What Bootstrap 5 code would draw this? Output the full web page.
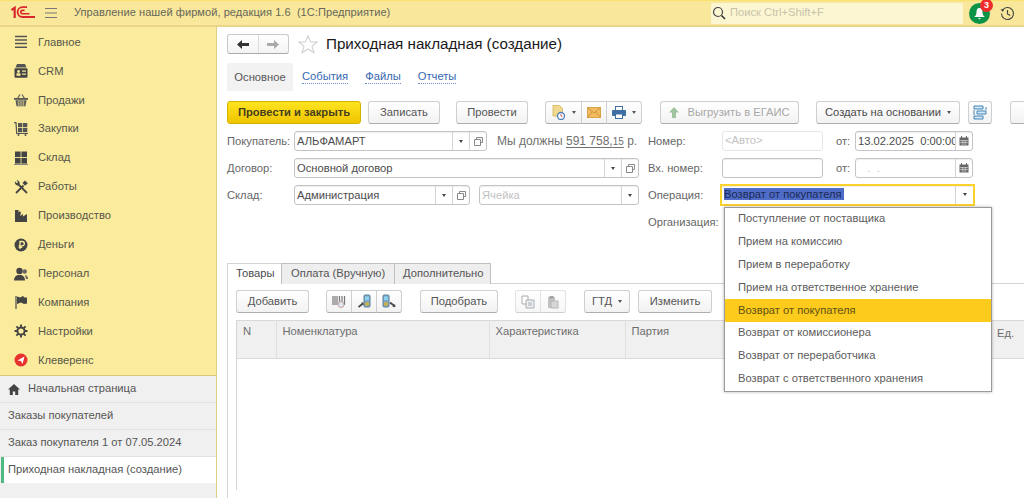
<!DOCTYPE html>
<html lang="ru"><head><meta charset="utf-8"><title>Приходная накладная</title>
<link href="https://cdn.jsdelivr.net/npm/bootstrap@5.3.0/dist/css/bootstrap.min.css" rel="stylesheet">
<style>
html,body{height:498px;overflow:hidden;background:#fff}
body{font-family:"Liberation Sans",Arial,sans-serif;font-size:11.2px;color:#555;line-height:1.2}
.topbar{height:27px;background:#f9e89b;border-top:1px solid #fbe26f;border-bottom:2px solid #ead68a}
.logo1c{width:24px;margin-left:11px;margin-right:9px;flex:none}
.burger{width:14px;margin-right:16px;flex:none}
.apptitle{font-size:11.05px;color:#66665a;letter-spacing:.05px;white-space:pre}
.searchbox{width:252px;height:21px;background:#fdf6d3;border-radius:2px;margin-right:6px;color:#c8c3aa;font-size:11.2px;padding-left:1px}
.bellwrap{width:21px;height:21px;background:#0b9347;border-radius:50%;margin-right:10px}
.bellbadge{top:-4px;left:11px;width:13px;height:13px;background:#ee2c2c;color:#fff;border-radius:50%;font-size:9px;font-weight:700;line-height:13px;text-align:center}
.histico{margin-right:9px}
.bodywrap{height:471px}
.sidebar{width:217px;background:#fbec9d;border-right:1px solid #dfcf85}
.menulist{padding-top:1px;height:348px}
.menuitem{height:28.9px;padding-left:14px;color:#56564a;font-size:11.2px}
.menuitem svg{width:14px;height:14px;margin-right:10px;flex:none}
.opentabs{background:#f0f0f0;border-top:1px solid #d8c878;flex:1}
.opentab{height:27px;padding-left:8px;border-bottom:1px solid #e2e2e2;color:#555;font-size:11.2px}
.opentab svg{margin-right:8px}
.opentab-active{background:#fff;border-left:3px solid #4fb97f;margin-left:1px;padding-left:4px;height:26px;border-bottom:0}
.mainpane{padding-left:10px;min-width:0;overflow:hidden}
.navrow{margin-top:7px;height:20px}
.navbtns{width:62px;height:20px;border:1px solid #c9c9c9;border-bottom-color:#aaa;border-radius:3px;background:linear-gradient(#fff,#f3f3f3)}
.navbtns>div{flex:1;height:100%}
.navbtns>div+div{border-left:1px solid #ddd}
.pagetitle{font-size:15.2px;color:#1a1a1a;margin:0 0 0 8px;font-weight:400}
.starico{margin-left:9px}
.subnav{margin-top:9px;height:28px}
.subnav .nav-link{padding:0 8.5px;color:#3667b0;font-size:11.2px;height:28px;display:flex;align-items:center}
.subnav .nav-link span{border-bottom:1px dotted #6d93c9;line-height:13px}
.subnav .nav-link.current{background:#f2f2f2;color:#555;width:66px;justify-content:center;padding:0;border-radius:2px;margin-right:.5px}
.subnav .nav-link.current span{border:0}
.toolrow{margin-top:10px;height:23px;white-space:nowrap;width:900px}
.gbtn{--bs-btn-padding-y:0;--bs-btn-padding-x:0;--bs-btn-font-size:11.2px;--bs-btn-border-radius:3px;height:23px;border:1px solid #cfcfcf;border-bottom-color:#aeaeae;background:linear-gradient(#fff,#f2f2f2);color:#555;display:flex;align-items:center;justify-content:center;flex:none}
.gbtn-main{width:134px;background:linear-gradient(#fde41f,#f0c400);border-color:#d5b200;color:#46401f;font-weight:700;margin-right:7px}
.w-zap{width:72px;margin-right:16px}
.w-prov{width:72px;margin-right:17px}
.gbtn-gray{color:#a8a8a8}
.w-eg{width:139px;margin-right:17px}
.w-cr{width:144px;margin-right:8px;color:#4a4a4a}
.w-ic{width:24px;margin-right:18px}
.w-more{width:60px}
.grp{display:flex;margin-right:18px;flex:none}
.grp .gbtn{border-radius:0;margin-left:-1px}
.grp .gbtn:first-child{border-radius:3px 0 0 3px;margin-left:0}
.grp .gbtn:last-child{border-radius:0 3px 3px 0}
.caretm{width:0;height:0;border-left:2.5px solid transparent;border-right:2.5px solid transparent;border-top:3px solid #555;margin-left:6px}
.w-file{width:37px}.w-mail{width:26px}.w-print{width:36px}
.frow{height:20px;margin-top:7px}
.frow:first-of-type{margin-top:8px}
.leftcol{width:421px;flex:none}
.flbl{width:67px;flex:none;color:#666;padding-top:1px}
.rlbl{width:74px;flex:none;color:#666;padding-top:1px}
.otlbl{width:32px;flex:none;padding-left:13px;color:#666;padding-top:1px}
.fld{height:20px;border:1px solid #c4c4c4;border-radius:3px;background:#fff;box-shadow:inset 0 1px 1px #eee;color:#4c4c4c;font-size:11.2px;padding-left:2px;overflow:hidden;flex:none;white-space:nowrap}
.fld .ftxt{flex:1;min-width:0;overflow:hidden;padding-top:1px}
.fbtn{width:17px;height:100%;border-left:1px solid #d4d4d4;flex:none;display:flex;align-items:center;justify-content:center}
.dcar{width:0;height:0;border-left:2.5px solid transparent;border-right:2.5px solid transparent;border-top:3px solid #444}
.w193{width:193px}.w345{width:345px}.w176{width:176px;margin-right:9px}.w160{width:160px}
.w101{width:101px}.w118{width:118px}
.fld-ghost{border-color:#e6e6e6;color:#c2c2c2;box-shadow:none}
.fld .fld-ph{color:#c2c2c2}
.debt{margin-left:10px;color:#707070;font-size:12px;white-space:nowrap;padding-top:1px}
.debt u{text-decoration-thickness:1px;text-underline-offset:2px}
.debt small{font-size:10px}
.fld-focus{width:255px;margin-left:-2px;border:2px solid #fcd22d;border-radius:0;padding-left:2px;height:22px;margin-top:-1px}
.fld-focus .fbtn{width:18px}
.sel{background:#4f6dc8;color:#1c2a55;padding-right:2px}
.docbody{margin-top:31px;height:235px}
.tabbar{border-bottom:1px solid #d4d4d4;height:21px;margin:0}
.tabbar .nav-link{padding:0 0 0 8px;height:21px;font-size:11.2px;color:#555;background:#eee;border:1px solid #bfbfbf;border-bottom:0;border-radius:0;margin:0;line-height:19px}
.tabbar .nav-link.active{background:#fff;color:#4c4c4c;border-color:#d4d4d4}
.tabbar li:first-child .nav-link{width:55px}
.tabbar li:nth-child(2) .nav-link{width:114px;margin-left:-1px;padding-left:9px}
.tabbar li:nth-child(3) .nav-link{width:97px;margin-left:-1px}
.tabpane{border-left:1px solid #d4d4d4;padding:6px 0 0 8px;height:215px}
.gridbar{height:23px}
.w-add{width:73px;margin-right:17px}
.w-pod{width:78px;margin-right:17px}
.w-gtd{width:46px;margin-right:8px}
.w-izm{width:74px}
.ib{width:26px}
.dbtn{opacity:.6}
.tblwrap{margin-top:7px;width:800px;border-left:1px solid #d4d4d4;height:170px}
.tblwrap table{table-layout:fixed;width:790px;margin:0;--bs-table-bg:transparent;border-top:1px solid #d8d8d8}
.tblwrap th{height:38px;background:#f0f0f0;border-right:1px solid #e0e0e0;border-bottom:1px solid #d8d8d8;font-weight:400;font-size:11.2px;color:#6e6e6e;padding:4px 6px;vertical-align:top}
.c1{width:39px}.c2{width:213px}.c3{width:136px}.c4{width:402px}
.popmenu{left:724px;top:207px;width:268px;z-index:20;border:1px solid #9a9a9a;background:#fff;box-shadow:0 0 3px rgba(0,0,0,.3);padding:0;border-radius:0}
.popmenu .list-group-item{height:22.85px;border:0;padding:0 0 1px 13px;font-size:11.2px;display:flex;align-items:center;color:#5c5c5c;border-radius:0}
.popmenu .list-group-item.picked{background:#fccb1c;color:#5f5015}
.edcol{left:997px;top:327px;color:#6e6e6e;z-index:5}
</style></head><body>

<div class="topbar d-flex align-items-center">
 <svg class="logo1c" height="14" viewBox="0 0 24 14"><path d="M.5 4L3.700 1.800V12" fill="none" stroke="#d9272e" stroke-width="2.200"/><path d="M16 1.200h-4.500a4.900 4.900 0 0 0 0 9.800H24" fill="none" stroke="#d9272e" stroke-width="1.800"/><path d="M18.500 7.800h-7a1.700 1.700 0 0 1 0-3.400h2" fill="none" stroke="#d9272e" stroke-width="1.600"/></svg>
 <svg class="burger" height="12" viewBox="0 0 14 12"><path d="M1 1.500h12M1 6h12M1 10.500h12" stroke="#777" stroke-width="1.200"/></svg>
 <span class="apptitle">Управление нашей фирмой, редакция 1.6  (1С:Предприятие)</span>
 <div class="ms-auto d-flex align-items-center">
  <div class="searchbox d-flex align-items-center">
   <svg width="14" height="14" viewBox="0 0 14 14"><circle cx="6" cy="6" r="4.500" fill="none" stroke="#444" stroke-width="1.200"/><path d="M9.500 9.500L13 13" stroke="#333" stroke-width="1.600"/></svg>
   <span class="ms-1">Поиск Ctrl+Shift+F</span>
  </div>
  <div class="bellwrap position-relative d-flex align-items-center justify-content-center">
   <svg width="13" height="13" viewBox="0 0 13 13"><path d="M6.500 1C4 1 3.500 3 3.500 5.500c0 2-1 3.500-2.500 4.500h11c-1.500-1-2.500-2.500-2.500-4.500C9.500 3 9 1 6.500 1z" fill="#fff"/><path d="M5 11h3l-1.500 1.500z" fill="#fff"/></svg>
   <span class="bellbadge position-absolute">3</span>
  </div>
  <svg class="histico" width="15" height="15" viewBox="0 0 15 15"><path d="M2.300 4.500A6 6 0 1 1 1.500 7.500" fill="none" stroke="#444" stroke-width="1.100"/><path d="M0.500 3.500l3.500-.5-1 3z" fill="#444"/><path d="M7.500 4v4l2.800 1.500" fill="none" stroke="#444" stroke-width="1.200"/></svg>
 </div>
</div>

<div class="bodywrap d-flex">
 <aside class="sidebar d-flex flex-column flex-shrink-0">
  <div class="menulist">
   <div class="menuitem d-flex align-items-center"><svg viewBox="0 0 14 14"><path d="M1 1.500h12M1 5h12M1 8.500h12M1 12.300h12" stroke="#555" stroke-width="1.600"/></svg>Главное</div>
   <div class="menuitem d-flex align-items-center"><svg viewBox="0 0 14 14"><path d="M3 0h8l1.500 3.500h-11z" fill="#555"/><rect x="0.500" y="4.300" width="13" height="9.500" rx="1" fill="#444"/><rect x="8" y="6.500" width="4" height="1.200" fill="#fbec9d"/><rect x="8" y="9.500" width="4" height="1.200" fill="#fbec9d"/><circle cx="4.500" cy="7.500" r="1.400" fill="#fbec9d"/><rect x="2.500" y="9.300" width="4" height="2.500" fill="#fbec9d"/></svg>CRM</div>
   <div class="menuitem d-flex align-items-center"><svg viewBox="0 0 14 14"><path d="M3.500 5.500L6 1.500M10.500 5.500L8 1.500" fill="none" stroke="#555" stroke-width="1.100"/><path d="M0 5h14v1.800H0z" fill="#555"/><path d="M1.500 7.200h11l-1 6h-9z" fill="#555"/><path d="M4.300 7.500v5.500M6.100 7.500v5.500M7.900 7.500v5.500M9.700 7.500v5.500" stroke="#fbec9d" stroke-width=".7"/></svg>Продажи</div>
   <div class="menuitem d-flex align-items-center"><svg viewBox="0 0 14 14"><path d="M0 .7h2l.7 10.800H14" fill="none" stroke="#555" stroke-width="1.200"/><rect x="4" y="1" width="4.300" height="4.200" fill="#555"/><rect x="9" y="1" width="4.300" height="4.200" fill="#555"/><rect x="4" y="6" width="4.300" height="4.200" fill="#555"/><rect x="9" y="6" width="4.300" height="4.200" fill="#555"/><circle cx="4.500" cy="13" r="1" fill="#555"/><circle cx="11.500" cy="13" r="1" fill="#555"/></svg>Закупки</div>
   <div class="menuitem d-flex align-items-center"><svg viewBox="0 0 14 14"><rect x="1" y="0.500" width="5.600" height="5.600" fill="#444"/><rect x="7.400" y="0.500" width="5.600" height="5.600" fill="#444"/><rect x="1" y="7" width="5.600" height="5.600" fill="#444"/><rect x="7.400" y="7" width="5.600" height="5.600" fill="#444"/><rect x="0" y="13" width="14" height="1" fill="#888"/></svg>Склад</div>
   <div class="menuitem d-flex align-items-center"><svg viewBox="0 0 14 14"><path d="M4 4l9 9" stroke="#444" stroke-width="1.800"/><path d="M1 1.500a3 3 0 0 0 3.500 3.800L5.500 4A3 3 0 0 0 2.500.2l1.500 2-1 1z" fill="#444"/><path d="M2 13L9.500 5.500" stroke="#444" stroke-width="1.800"/><path d="M8.500 3L11 .5l2.800 2.800L11 5.800z" fill="#444"/></svg>Работы</div>
   <div class="menuitem d-flex align-items-center"><svg viewBox="0 0 14 14"><path d="M1 1h3.500v2.500L6 2l1 2-1 3 3-2v2.500L13 5v8H1z" fill="#444"/></svg>Производство</div>
   <div class="menuitem d-flex align-items-center"><svg viewBox="0 0 14 14"><circle cx="7" cy="7" r="6.500" fill="#444"/><path d="M6 11V3.500h2.200a2 2 0 0 1 0 4.300H4.700M4.700 9.300h3.500" fill="none" stroke="#fbec9d" stroke-width="1.300"/></svg>Деньги</div>
   <div class="menuitem d-flex align-items-center"><svg viewBox="0 0 14 14"><circle cx="5.500" cy="4" r="3.200" fill="#444"/><path d="M0 13.500c0-3.500 2-5.500 5.500-5.500s5.500 2 5.500 5.500z" fill="#444"/><circle cx="10.700" cy="4.500" r="2.200" fill="#666"/><path d="M11 8c2 .3 3 2 3 4h-2z" fill="#666"/></svg>Персонал</div>
   <div class="menuitem d-flex align-items-center"><svg viewBox="0 0 14 14"><path d="M2 1v13" stroke="#555" stroke-width="1.300"/><path d="M3 1.500l3 1 3-1.500 1.500 1.500h2.500V8.500l-3 .5-3-1.500L3 9z" fill="#444"/></svg>Компания</div>
   <div class="menuitem d-flex align-items-center"><svg viewBox="0 0 14 14"><circle cx="7" cy="7" r="3.600" fill="none" stroke="#444" stroke-width="2"/><path d="M7 .5v2.500M7 11v2.500M.5 7H3M11 7h2.500M2.400 2.400l1.800 1.800M9.800 9.800l1.800 1.800M11.600 2.400L9.800 4.200M4.200 9.800l-1.800 1.800" stroke="#444" stroke-width="1.900"/></svg>Настройки</div>
   <div class="menuitem d-flex align-items-center"><svg viewBox="0 0 14 14"><circle cx="7" cy="7" r="6.500" fill="#e8322d"/><path d="M10.500 3.500L3.500 7.500l3.500.6L8.500 11z" fill="#fff"/></svg>Клеверенс</div>
  </div>
  <div class="opentabs">
   <div class="opentab d-flex align-items-center"><svg width="12" height="11" viewBox="0 0 12 11"><path d="M6 0L0 5.500h1.800V11h3V7.500h2.400V11h3V5.500H12z" fill="#444"/></svg>Начальная страница</div>
   <div class="opentab d-flex align-items-center">Заказы покупателей</div>
   <div class="opentab d-flex align-items-center">Заказ покупателя 1 от 07.05.2024</div>
   <div class="opentab opentab-active d-flex align-items-center">Приходная накладная (создание)</div>
  </div>
 </aside>

 <main class="mainpane flex-grow-1">
  <div class="navrow d-flex align-items-center">
   <div class="navbtns d-flex">
    <div class="d-flex align-items-center justify-content-center"><svg width="12" height="9" viewBox="0 0 12 9"><path d="M0 4.500L5 0v3h7v3H5v3z" fill="#333"/></svg></div>
    <div class="d-flex align-items-center justify-content-center"><svg width="12" height="9" viewBox="0 0 12 9"><path d="M12 4.500L7 0v3H0v3h7v3z" fill="#aaa"/></svg></div>
   </div>
   <svg class="starico" width="20" height="19" viewBox="0 0 20 19"><path d="M10 1l2.700 6h6.300l-5 4.200 1.900 6.500L10 14l-5.900 3.700L6 11.200 1 7h6.300z" fill="none" stroke="#d0d0d0" stroke-width="1.100"/></svg>
   <h1 class="pagetitle">Приходная накладная (создание)</h1>
  </div>
  <ul class="nav subnav">
   <li class="nav-item"><a class="nav-link current" href="#"><span>Основное</span></a></li>
   <li class="nav-item"><a class="nav-link" href="#"><span>События</span></a></li>
   <li class="nav-item"><a class="nav-link" href="#"><span>Файлы</span></a></li>
   <li class="nav-item"><a class="nav-link" href="#"><span>Отчеты</span></a></li>
  </ul>
  <div class="toolrow d-flex">
   <button class="btn gbtn gbtn-main">Провести и закрыть</button>
   <button class="btn gbtn w-zap">Записать</button>
   <button class="btn gbtn w-prov">Провести</button>
   <div class="grp">
    <button class="btn gbtn w-file"><svg width="14" height="15" viewBox="0 0 14 15"><path d="M1 0.500h6.500l3 3V11H1z" fill="#efd98f" stroke="#d3b35c" stroke-width=".8"/><circle cx="9" cy="11" r="3.500" fill="#fff" stroke="#4f7fb8" stroke-width="1.300"/><path d="M9 9v2l1.300.8" stroke="#c44" fill="none" stroke-width=".9"/></svg><span class="caretm"></span></button>
    <button class="btn gbtn w-mail"><svg width="14" height="11" viewBox="0 0 14 11"><rect x=".5" y=".5" width="13" height="10" fill="#f0bb62" stroke="#dca449"/><path d="M.5.500L7 6l6.500-5.500M.5 10.500L5 5M13.500 10.500L9 5" fill="none" stroke="#c98a2a" stroke-width=".8"/></svg></button>
    <button class="btn gbtn w-print"><svg width="14" height="13" viewBox="0 0 14 13"><rect x="3.500" y="0.500" width="7" height="4" fill="#fff" stroke="#3f6ea3"/><rect x="0" y="4" width="14" height="6" rx="1" fill="#3f6ea3"/><rect x="3.500" y="8" width="7" height="4.500" fill="#fff" stroke="#3f6ea3"/></svg><span class="caretm"></span></button>
   </div>
   <button class="btn gbtn gbtn-gray w-eg"><svg class="me-2" width="10" height="11" viewBox="0 0 10 11"><path d="M5 0l5 5.500H7V11H3V5.500H0z" fill="#9fc49f"/></svg>Выгрузить в ЕГАИС</button>
   <button class="btn gbtn w-cr">Создать на основании<span class="caretm"></span></button>
   <button class="btn gbtn w-ic"><svg width="14" height="15" viewBox="0 0 14 15"><path d="M1 1h9v3H1zM4 6h9v3H4zM1 11h9v3H1z" fill="#d7e8f5" stroke="#3e82b8"/><path d="M13 2v3M1 5v5" stroke="#3e82b8"/></svg></button>
   <button class="btn gbtn w-more">&nbsp;</button>
  </div>

  <div class="frow d-flex align-items-center">
   <div class="leftcol d-flex align-items-center">
    <span class="flbl">Покупатель:</span>
    <div class="fld w193 d-flex align-items-center"><span class="ftxt">АЛЬФАМАРТ</span><span class="fbtn"><i class="dcar"></i></span><span class="fbtn"><svg width="9" height="9" viewBox="0 0 9 9"><path d="M2.500 2.500V.5h6v5h-2M.5 2.500h6v6h-6z" fill="none" stroke="#888"/></svg></span></div>
    <span class="debt">Мы должны <u>591 758,<small>15</small></u> р.</span>
   </div>
   <span class="rlbl">Номер:</span>
   <div class="fld fld-ghost w101 d-flex align-items-center">&lt;Авто&gt;</div>
   <span class="otlbl">от:</span>
   <div class="fld w118 d-flex align-items-center"><span class="ftxt">13.02.2025&nbsp; 0:00:00</span><span class="fbtn"><svg width="10" height="10" viewBox="0 0 10 10"><rect x="0.500" y="1.500" width="9" height="8" fill="#666"/><path d="M1 4.500h8M1 6.500h8M3.300 4v5M5 4v5M6.800 4v5" stroke="#ddd" stroke-width=".6"/><path d="M2.500 0v2M7.500 0v2" stroke="#666"/></svg></span></div>
  </div>
  <div class="frow d-flex align-items-center">
   <div class="leftcol d-flex align-items-center">
    <span class="flbl">Договор:</span>
    <div class="fld w345 d-flex align-items-center"><span class="ftxt">Основной договор</span><span class="fbtn"><i class="dcar"></i></span><span class="fbtn"><svg width="9" height="9" viewBox="0 0 9 9"><path d="M2.500 2.500V.5h6v5h-2M.5 2.500h6v6h-6z" fill="none" stroke="#888"/></svg></span></div>
   </div>
   <span class="rlbl">Вх. номер:</span>
   <div class="fld w101"></div>
   <span class="otlbl">от:</span>
   <div class="fld w118 d-flex align-items-center"><span class="ftxt fld-ph">&nbsp;&nbsp; .&nbsp; .</span><span class="fbtn"><svg width="10" height="10" viewBox="0 0 10 10"><rect x="0.500" y="1.500" width="9" height="8" fill="#666"/><path d="M1 4.500h8M1 6.500h8M3.300 4v5M5 4v5M6.800 4v5" stroke="#ddd" stroke-width=".6"/><path d="M2.500 0v2M7.500 0v2" stroke="#666"/></svg></span></div>
  </div>
  <div class="frow d-flex align-items-center">
   <div class="leftcol d-flex align-items-center">
    <span class="flbl">Склад:</span>
    <div class="fld w176 d-flex align-items-center"><span class="ftxt">Администрация</span><span class="fbtn"><i class="dcar"></i></span><span class="fbtn"><svg width="9" height="9" viewBox="0 0 9 9"><path d="M2.500 2.500V.5h6v5h-2M.5 2.500h6v6h-6z" fill="none" stroke="#888"/></svg></span></div>
    <div class="fld w160 d-flex align-items-center"><span class="ftxt fld-ph">Ячейка</span><span class="fbtn"><i class="dcar"></i></span></div>
   </div>
   <span class="rlbl">Операция:</span>
   <div class="fld fld-focus d-flex align-items-center"><span class="ftxt"><span class="sel">Возврат от покупателя</span></span><span class="fbtn"><i class="dcar"></i></span></div>
  </div>
  <div class="frow d-flex align-items-center">
   <div class="leftcol"></div>
   <span class="rlbl">Организация:</span>
  </div>

  <div class="docbody">
   <ul class="nav nav-tabs tabbar">
    <li class="nav-item"><a class="nav-link active" href="#">Товары</a></li>
    <li class="nav-item"><a class="nav-link" href="#">Оплата (Вручную)</a></li>
    <li class="nav-item"><a class="nav-link" href="#">Дополнительно</a></li>
   </ul>
   <div class="tabpane">
    <div class="gridbar d-flex">
     <button class="btn gbtn w-add">Добавить</button>
     <div class="grp">
      <button class="btn gbtn ib"><svg width="14" height="14" viewBox="0 0 14 14"><path d="M1 1v9M3 1v9M5 1v9M7.500 1v9M10 1v9M12.500 1v9" stroke="#777" stroke-width="1.200"/><circle cx="9" cy="9.500" r="3" fill="#dbe6f2" stroke="#c9a0a0"/></svg></button>
      <button class="btn gbtn ib"><svg width="15" height="15" viewBox="0 0 15 15"><rect x="7" y="1" width="6" height="12" rx="1" fill="#7fa9c4" stroke="#5d8099"/><rect x="8" y="2.500" width="4" height="3.500" fill="#8fd1f0"/><rect x="8" y="8.500" width="4" height="3" fill="#cfb040"/><path d="M1.500 13l4.500-3.500" stroke="#444" stroke-width="1.600"/><path d="M6.500 8.500v3l-2.500-3z" fill="#444"/></svg></button>
      <button class="btn gbtn ib"><svg width="15" height="15" viewBox="0 0 15 15"><rect x="1" y="1" width="6" height="12" rx="1" fill="#7fa9c4" stroke="#5d8099"/><rect x="2" y="2.500" width="4" height="3.500" fill="#8fd1f0"/><rect x="2" y="8.500" width="4" height="3" fill="#cfb040"/><path d="M8 8.500l4.500 3.500" stroke="#444" stroke-width="1.600"/><path d="M13.500 13h-3l2.500-3z" fill="#444"/></svg></button>
     </div>
     <button class="btn gbtn w-pod">Подобрать</button>
     <div class="grp dbtn">
      <button class="btn gbtn ib"><svg width="14" height="14" viewBox="0 0 14 14"><path d="M1 1h6v8H1z" fill="#fff" stroke="#777"/><path d="M5 5h8v8H5z" fill="#dfe7ef" stroke="#777"/><path d="M7 8h4M7 10h4" stroke="#777"/></svg></button>
      <button class="btn gbtn ib"><svg width="14" height="14" viewBox="0 0 14 14"><rect x="2" y="2" width="7" height="11" fill="#999"/><rect x="5" y="6" width="7" height="7" fill="#bbb" stroke="#888"/><rect x="3.500" y="1" width="4" height="2.500" fill="#666"/></svg></button>
     </div>
     <button class="btn gbtn w-gtd">ГТД<span class="caretm"></span></button>
     <button class="btn gbtn w-izm">Изменить</button>
    </div>
    <div class="tblwrap">
     <table class="table">
      <colgroup><col class="c1"><col class="c2"><col class="c3"><col class="c4"></colgroup>
      <thead><tr><th>N</th><th>Номенклатура</th><th>Характеристика</th><th>Партия</th></tr></thead>
     </table>
    </div>
   </div>
  </div>
 </main>
</div>

<div class="list-group popmenu position-absolute">
 <div class="list-group-item">Поступление от поставщика</div>
 <div class="list-group-item">Прием на комиссию</div>
 <div class="list-group-item">Прием в переработку</div>
 <div class="list-group-item">Прием на ответственное хранение</div>
 <div class="list-group-item picked">Возврат от покупателя</div>
 <div class="list-group-item">Возврат от комиссионера</div>
 <div class="list-group-item">Возврат от переработчика</div>
 <div class="list-group-item">Возврат с ответственного хранения</div>
</div>
<span class="edcol position-absolute">Ед.</span>
</body></html>
